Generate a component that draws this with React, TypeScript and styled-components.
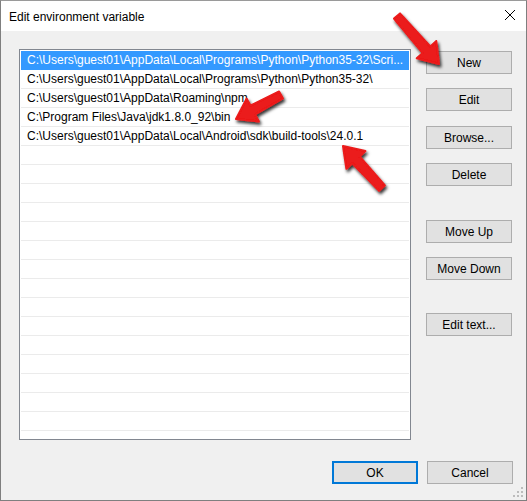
import React from "react";
import styled, { createGlobalStyle, css } from "styled-components";

const GlobalStyle = createGlobalStyle`
  html, body { margin: 0; padding: 0; background: #f0f0f0; }
  * { box-sizing: border-box; }
`;

const Window = styled.div`
  position: relative;
  width: 527px;
  height: 501px;
  border: 1px solid #7f7f7f;
  border-top-color: #9a9a9a;
  background: #f0f0f0;
  display: flex;
  flex-direction: column;
  font-family: "Liberation Sans", Arial, sans-serif;
  font-size: 12px;
  color: #000;
  overflow: hidden;
`;

const TitleBar = styled.div`
  height: 30px;
  flex: none;
  background: #fff;
  display: flex;
  align-items: center;
  justify-content: space-between;
  padding: 0 10px 0 8px;
`;

const Title = styled.span`
  font-size: 12px;
  line-height: 16px;
  margin-top: 1px;
`;

const CloseBox = styled.div`
  width: 12px;
  height: 12px;
  display: flex;
  margin-top: -2px;
`;

const Body = styled.div`
  flex: 1;
  display: flex;
  flex-direction: column;
  padding: 18px 13px 15px 18px;
`;

const MainRow = styled.div`
  display: flex;
  gap: 15px;
`;

const List = styled.div`
  width: 392px;
  height: 391px;
  border: 1px solid #828790;
  background: #fff;
  padding: 1px;
  overflow: hidden;
`;

const Row = styled.div<{ $selected?: boolean }>`
  height: 19px;
  line-height: 18px;
  padding: 0 0 0 6px;
  border-bottom: 1px solid #ebebeb;
  white-space: nowrap;
  overflow: hidden;
  ${(p) =>
    p.$selected &&
    css`
      background: #3399ff;
      color: #fff;
      border-bottom-color: #3399ff;
    `}
`;

const ButtonColumn = styled.div`
  width: 86px;
  display: flex;
  flex-direction: column;
  padding-top: 2px;
`;

const Button = styled.div<{ $mt?: number; $default?: boolean }>`
  width: 86px;
  height: 23px;
  flex: none;
  margin-top: ${(p) => p.$mt ?? 0}px;
  background: #e1e1e1;
  border: 1px solid #adadad;
  display: flex;
  align-items: center;
  justify-content: center;
  font-size: 12px;
  color: #000;
  ${(p) =>
    p.$default &&
    css`
      border: 2px solid #0078d7;
    `}
`;

const Footer = styled.div`
  display: flex;
  justify-content: flex-end;
  gap: 9px;
  margin-top: 21px;
`;

const Overlay = styled.svg`
  position: absolute;
  left: -1px;
  top: -1px;
  pointer-events: none;
`;

const Grip = styled.svg`
  position: absolute;
  right: 3px;
  bottom: 3px;
`;

function arrowPoints(
  x1: number,
  y1: number,
  x2: number,
  y2: number,
  sw: number,
  hw: number,
  hl: number
): string {
  const dx = x2 - x1;
  const dy = y2 - y1;
  const len = Math.hypot(dx, dy);
  const ux = dx / len;
  const uy = dy / len;
  const nx = -uy;
  const ny = ux;
  const bx = x2 - ux * hl;
  const by = y2 - uy * hl;
  const pts: [number, number][] = [
    [x1 + nx * sw * 0.4, y1 + ny * sw * 0.4],
    [bx + nx * sw / 2, by + ny * sw / 2],
    [bx + nx * hw / 2, by + ny * hw / 2],
    [x2, y2],
    [bx - nx * hw / 2, by - ny * hw / 2],
    [bx - nx * sw / 2, by - ny * sw / 2],
    [x1 - nx * sw * 0.4, y1 - ny * sw * 0.4],
  ];
  return pts.map((p) => `${p[0].toFixed(1)},${p[1].toFixed(1)}`).join(" ");
}

const rows: string[] = [
  "C:\\Users\\guest01\\AppData\\Local\\Programs\\Python\\Python35-32\\Scri...",
  "C:\\Users\\guest01\\AppData\\Local\\Programs\\Python\\Python35-32\\",
  "C:\\Users\\guest01\\AppData\\Roaming\\npm",
  "C:\\Program Files\\Java\\jdk1.8.0_92\\bin",
  "C:\\Users\\guest01\\AppData\\Local\\Android\\sdk\\build-tools\\24.0.1",
];

const allRows = [...rows, ...Array.from({ length: 16 }, () => "")];

const arrows = [
  { x1: 397, y1: 16, x2: 439, y2: 64 },
  { x1: 281, y1: 95, x2: 236, y2: 119 },
  { x1: 382, y1: 188, x2: 343, y2: 146 },
];

export default function App() {
  return (
    <>
      <GlobalStyle />
      <Window>
        <TitleBar>
          <Title>Edit environment variable</Title>
          <CloseBox>
            <svg width="12" height="12" viewBox="0 0 12 12">
              <path d="M1 1 L11 11 M11 1 L1 11" stroke="#000" strokeWidth="1" />
            </svg>
          </CloseBox>
        </TitleBar>
        <Body>
          <MainRow>
            <List>
              {allRows.map((r, i) => (
                <Row key={i} $selected={i === 0}>
                  {r || "\u00a0"}
                </Row>
              ))}
            </List>
            <ButtonColumn>
              <Button>New</Button>
              <Button $mt={14}>Edit</Button>
              <Button $mt={15}>Browse...</Button>
              <Button $mt={14}>Delete</Button>
              <Button $mt={34}>Move Up</Button>
              <Button $mt={14}>Move Down</Button>
              <Button $mt={33}>Edit text...</Button>
            </ButtonColumn>
          </MainRow>
          <Footer>
            <Button $default>OK</Button>
            <Button>Cancel</Button>
          </Footer>
        </Body>
        <Grip width="10" height="10" viewBox="0 0 10 10">
          {[
            [8, 0],
            [4, 4],
            [8, 4],
            [0, 8],
            [4, 8],
            [8, 8],
          ].map(([x, y], i) => (
            <rect key={i} x={x} y={y} width="2" height="2" fill="#bcbcbc" />
          ))}
        </Grip>
        <Overlay width="527" height="501" viewBox="0 0 527 501">
          <defs>
            <filter id="sh" x="-30%" y="-30%" width="160%" height="160%">
              <feDropShadow dx="1.5" dy="2.5" stdDeviation="1.8" floodColor="#000" floodOpacity="0.8" />
            </filter>
          </defs>
          {arrows.map((a, i) => (
            <polygon
              key={i}
              points={arrowPoints(a.x1, a.y1, a.x2, a.y2, 10, 26, 19)}
              fill="#eb1a1a"
              strokeLinejoin="round"
              stroke="#eb1a1a"
              strokeWidth="2"
              filter="url(#sh)"
            />
          ))}
        </Overlay>
      </Window>
    </>
  );
}
